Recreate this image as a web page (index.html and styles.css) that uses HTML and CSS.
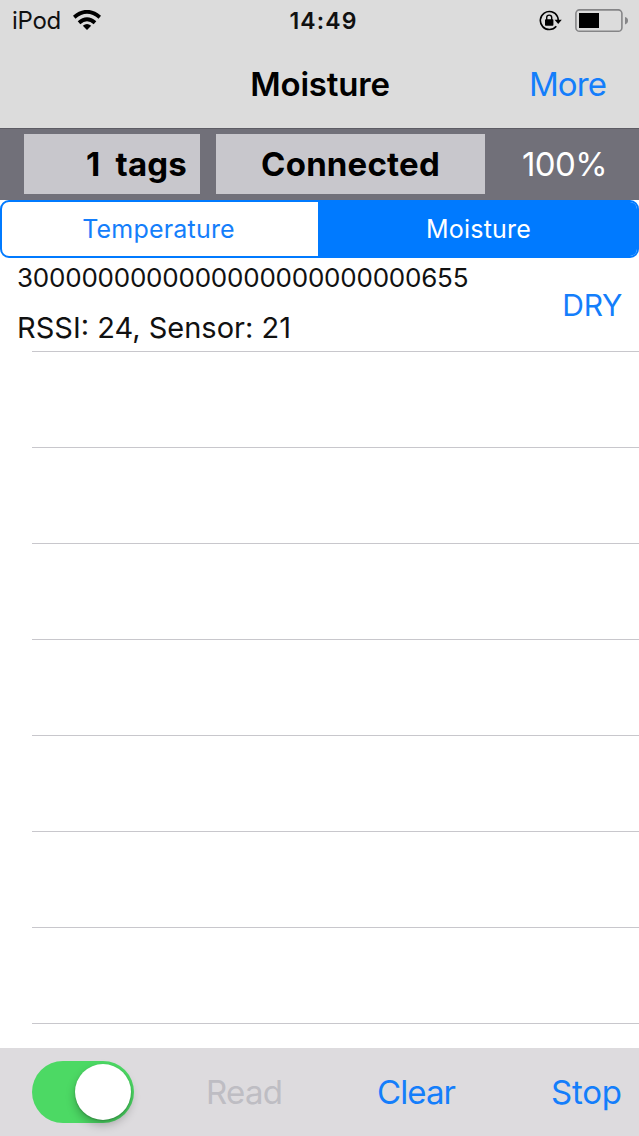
FILE: index.html
```html
<!DOCTYPE html>
<html lang="en">
<head>
    <meta charset="UTF-8">
    <meta name="viewport" content="width=device-width, initial-scale=1.0">
    <title>Moisture</title>
    <link rel="stylesheet" href="styles.css">
</head>
<body>
    <header>
        <div class="status-bar">
            <div class="carrier">
                <span>iPod</span>
                <svg class="wifi" width="28" height="20" viewBox="0 0 28 20">
                    <path d="M1.2 7.2 Q14 -3.6 26.8 7.2" fill="none" stroke="#000" stroke-width="3.8"/>
                    <path d="M6 12.8 Q14 5.8 22 12.8" fill="none" stroke="#000" stroke-width="3.9"/>
                    <path d="M9.8 15.8 Q14 12.2 18.2 15.8 L14 20 Z" fill="#000"/>
                </svg>
            </div>
            <div class="clock">14:49</div>
            <div class="indicators">
                <svg class="lock" width="23" height="21" viewBox="0 0 23 21">
                    <path d="M18.4 6.5 A9 9 0 1 0 17.3 16.2" fill="none" stroke="#000" stroke-width="1.6"/>
                    <path d="M18.2 6 Q19.2 8 19.2 10" fill="none" stroke="#000" stroke-width="1.6"/>
                    <path d="M15.6 9.8 H22.8 L19.2 14 Z" fill="#000"/>
                    <rect x="6" y="9.3" width="8.4" height="6.4" rx="0.8" fill="#000"/>
                    <path d="M7.7 10 V7.6 A2.5 2.5 0 0 1 12.7 7.6 V10" fill="none" stroke="#000" stroke-width="1.4"/>
                </svg>
                <svg class="battery" width="53" height="24" viewBox="0 0 53 24">
                    <rect x="0.9" y="0.9" width="46" height="21.4" rx="3.6" fill="none" stroke="#858587" stroke-width="1.6"/>
                    <rect x="4" y="4" width="20" height="15" fill="#000"/>
                    <path d="M50 8 Q53 8.6 53 11.6 Q53 14.8 50 15.4 Z" fill="#858587"/>
                </svg>
            </div>
        </div>
        <nav>
            <h1>Moisture</h1>
            <a class="more">More</a>
        </nav>
    </header>

    <div class="info-bar">
        <div class="info tags">1 tags</div>
        <div class="info connection">Connected</div>
        <div class="percent">100%</div>
    </div>

    <div class="segments">
        <div class="segment temperature">Temperature</div>
        <div class="segment active">Moisture</div>
    </div>

    <main>
        <div class="row first">
            <div class="details">
                <div class="tag-id">3000000000000000000000000655</div>
                <div class="reading">RSSI: 24, Sensor: 21</div>
            </div>
            <div class="state">DRY</div>
        </div>
        <div class="row"></div>
        <div class="row"></div>
        <div class="row"></div>
        <div class="row"></div>
        <div class="row"></div>
        <div class="row"></div>
        <div class="row"></div>
    </main>

    <footer>
        <div class="switch"><div class="knob"></div></div>
        <a class="read">Read</a>
        <a class="clear">Clear</a>
        <a class="stop">Stop</a>
    </footer>
</body>
</html>
```
FILE: styles.css
```css
* {
    box-sizing: border-box;
}
body {
    font-family: Inter, 'Liberation Sans', sans-serif;
    margin: 0;
    height: 1136px;
    display: flex;
    flex-direction: column;
    overflow: hidden;
    background-color: #fff;
    color: #111;
    white-space: nowrap;
}
header {
    height: 128px;
    background-color: #dcdcdc;
}
.status-bar {
    display: grid;
    grid-template-columns: 1fr auto 1fr;
    height: 40px;
    padding: 0 11px 0 12px;
    font-size: 24px;
    line-height: 42px;
}
.carrier {
    display: flex;
    gap: 12px;
    letter-spacing: -0.3px;
}
.wifi {
    margin-top: 10px;
}
.clock {
    font-weight: 600;
    font-size: 23px;
    letter-spacing: 1.1px;
    padding-left: 7px;
}
.indicators {
    display: flex;
    justify-content: flex-end;
    gap: 13px;
}
.lock {
    margin-top: 10px;
}
.battery {
    margin-top: 9px;
}
nav {
    display: grid;
    grid-template-columns: 1fr auto 1fr;
    height: 88px;
    line-height: 88px;
    padding-right: 33px;
    padding-left: 34px;
    font-size: 33px;
}
h1 {
    grid-column: 2;
    margin: 0;
    font-size: 33px;
    font-weight: 600;
    letter-spacing: -0.2px;
    color: #000;
}
.more {
    text-align: right;
    letter-spacing: -0.9px;
    color: #147efb;
}
.info-bar {
    display: flex;
    height: 72px;
    padding: 6px 0 6px 24px;
    background-color: #717079;
    border-top: 1px solid #5d5c64;
    padding-top: 5px;
}
.info {
    height: 60px;
    line-height: 60px;
    background-color: #c8c7cc;
    color: #000;
    font-size: 33px;
    font-weight: 700;
}
.tags {
    width: 176px;
    margin-right: 16px;
    padding-right: 13px;
    text-align: right;
    word-spacing: 7px;
    letter-spacing: 0.2px;
}
.connection {
    width: 269px;
    text-align: center;
    letter-spacing: 0.2px;
}
.percent {
    flex: 1;
    line-height: 60px;
    padding-left: 37px;
    color: #fff;
    font-size: 33px;
    letter-spacing: -0.6px;
}
.segments {
    display: flex;
    height: 58px;
    border: 2px solid #007aff;
    border-radius: 9px;
    overflow: hidden;
}
.segment {
    flex: 1;
    line-height: 55px;
    font-size: 25px;
    letter-spacing: 0.2px;
    text-align: center;
    color: #147efb;
}
.temperature {
    flex: 0 0 316px;
    padding-right: 3px;
}
.segment.active {
    background-color: #007aff;
    color: #fff;
    padding-left: 2px;
}
main {
    flex: 1;
}
.row {
    height: 96px;
    margin-left: 32px;
    border-bottom: 1px solid #c8c7cc;
}
.row.first {
    display: flex;
    height: 94px;
    justify-content: space-between;
    margin-left: 0;
    padding: 0 17px 0 17px;
    border-bottom: none;
    background: linear-gradient(#c8c7cc, #c8c7cc) 32px 100% / 100% 1px no-repeat;
}
.tag-id {
    font-size: 26px;
    line-height: 39px;
    letter-spacing: -0.22px;
}
.reading {
    font-size: 29px;
    line-height: 36px;
    margin-top: 13px;
}
.state {
    font-size: 30px;
    line-height: 95px;
    letter-spacing: -0.3px;
    color: #147efb;
}
footer {
    display: flex;
    height: 88px;
    line-height: 88px;
    padding-left: 32px;
    font-size: 33px;
    background-color: #dddbde;
    color: #147efb;
}
.switch {
    width: 102px;
    height: 62px;
    margin-top: 13px;
    padding: 3px;
    border-radius: 31px;
    background-color: #4cd964;
}
.knob {
    width: 56px;
    height: 56px;
    margin-left: 40px;
    border-radius: 50%;
    background-color: #fff;
    box-shadow: 0 5px 10px rgba(0, 0, 0, 0.25), 0 1px 2px rgba(0, 0, 0, 0.2);
}
.read {
    width: 171px;
    margin-left: 72px;
    letter-spacing: -0.7px;
    color: #bebdc3;
}
.clear {
    width: 174px;
    letter-spacing: -0.9px;
}
.stop {
    letter-spacing: -0.2px;
}
```
